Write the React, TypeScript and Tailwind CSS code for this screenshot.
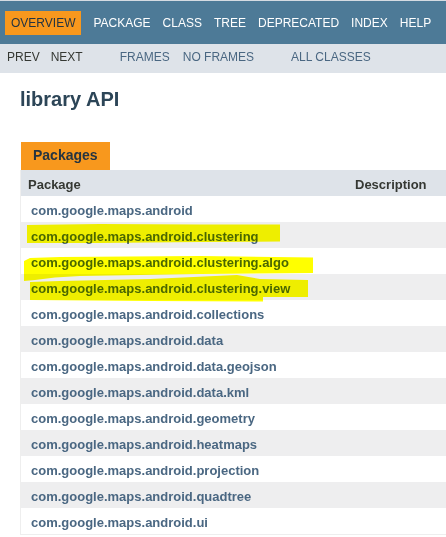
import React from 'react';

const topNav = ['PACKAGE', 'CLASS', 'TREE', 'DEPRECATED', 'INDEX', 'HELP'];

const packages = [
  'com.google.maps.android',
  'com.google.maps.android.clustering',
  'com.google.maps.android.clustering.algo',
  'com.google.maps.android.clustering.view',
  'com.google.maps.android.collections',
  'com.google.maps.android.data',
  'com.google.maps.android.data.geojson',
  'com.google.maps.android.data.kml',
  'com.google.maps.android.geometry',
  'com.google.maps.android.heatmaps',
  'com.google.maps.android.projection',
  'com.google.maps.android.quadtree',
  'com.google.maps.android.ui',
];

// marker strokes drawn over the page
const Highlights: React.FC = () => (
  <svg
    className="absolute top-0 left-0 pointer-events-none mix-blend-multiply"
    width={446}
    height={537}
    viewBox="0 0 446 537"
  >
    <path
      fill="#ffff00"
      d="M27 225 L100 224 L200 224.5 L280 224.5 L280 241.5 L200 242 L100 243 L27 243 Z"
    />
    <path
      fill="#ffff00"
      d="M24 261 L30 258 L60 257 L200 256 L313 257.5 L313 273 L200 274 L80 276 L55 277.5 L35 280 L24 281 Z"
    />
    <path
      fill="#ffff00"
      d="M30 282 L60 281 L150 279 L237 275 L260 279 L308 280 L308 297 L263 297 L263 301.5 L150 301 L30 300 Z"
    />
  </svg>
);

const App: React.FC = () => {
  return (
    <div className="relative w-[446px] h-[537px] overflow-hidden bg-white font-['Liberation_Sans',Arial,sans-serif]">
      <div className="h-px bg-[#d5dbe2]" />
      {/* top navigation */}
      <div className="h-[43px] bg-[#4D7A97] flex items-start pt-[10px] pl-[5px] text-[12px] leading-[14px]">
        <span className="bg-[#F8981D] text-[#253441] px-[6px] pt-[5px] h-[24px] mr-[6px]">OVERVIEW</span>
        {topNav.map((item) => (
          <span key={item} className="text-white px-[6px] pt-[5px]">
            {item}
          </span>
        ))}
      </div>
      {/* sub navigation */}
      <div className="h-[29px] bg-[#dee3e9] flex pt-[6px] pl-[7px] text-[12px] leading-[14px]">
        <span className="text-[#353833]">PREV</span>
        <span className="text-[#353833] ml-[11px]">NEXT</span>
        <span className="text-[#4A6782] ml-[37px]">FRAMES</span>
        <span className="text-[#4A6782] ml-[13px]">NO FRAMES</span>
        <span className="text-[#4A6782] ml-[37px]">ALL CLASSES</span>
      </div>

      <h1 className="mt-[14px] ml-[20px] text-[20px] leading-[24px] font-bold text-[#2c4557]">library API</h1>

      <div className="mt-[31px] ml-[20px]">
        <div className="ml-px w-[89px] h-[28px] bg-[#F8981D] text-[#253441] font-bold text-[14px] leading-[16px] pt-[5px] pl-[12px]">
          Packages
        </div>
        <div className="border-l border-b border-[#eeeeee]">
          <div className="grid grid-cols-[327px_1fr] h-[26px] bg-[#dee3e9] text-[13px] leading-[14px] font-bold text-[#353833] pt-[8px]">
            <span className="pl-[7px]">Package</span>
            <span className="pl-[7px]">Description</span>
          </div>
          {packages.map((pkg, i) => (
            <div
              key={pkg}
              className={`h-[26px] pt-[8px] pl-[10px] text-[13px] leading-[14px] font-bold text-[#4A6782] ${
                i % 2 === 1 ? 'bg-[#eeeeef]' : 'bg-white'
              }`}
            >
              {pkg}
            </div>
          ))}
        </div>
      </div>

      <Highlights />
    </div>
  );
};

export default App;
